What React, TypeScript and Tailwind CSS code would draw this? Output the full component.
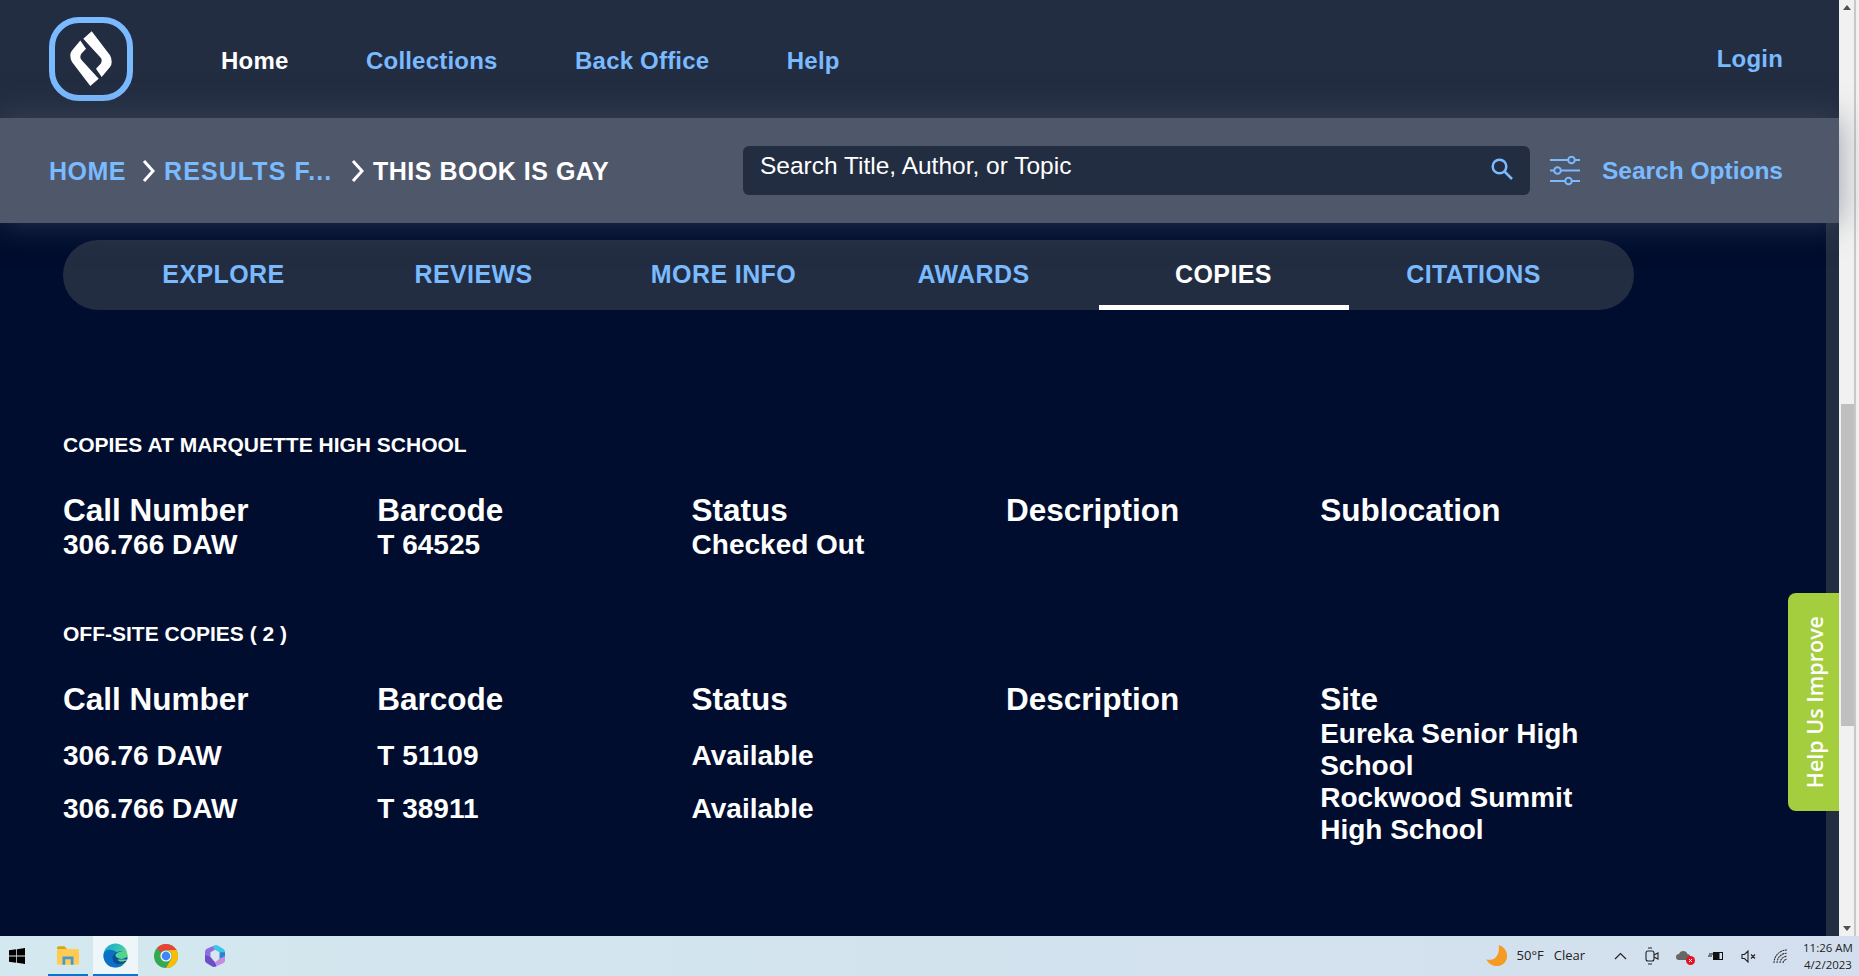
const nav = ['Collections', 'Back Office', 'Help'];
const tabs = ['EXPLORE', 'REVIEWS', 'MORE INFO', 'AWARDS', 'COPIES', 'CITATIONS'];

const Logo = () => (
    <svg width="84" height="84" viewBox="0 0 84 84" fill="none">
        <rect x="3" y="3" width="78" height="78" rx="27" stroke="#7ABAFF" strokeWidth="6" />
        <path d="M34.3 21.7 42.7 14.3 61 38.3Q62.7 41 62.7 45 62.7 48 61 50L52.7 60 47 51.7 51.7 46.7Q52.7 45 52.7 43.3 52.7 41.5 51 40Z" fill="#fff" />
        <path d="M49.7 61.7 41.3 69.1 23 45.1Q21.3 42.4 21.3 38.4 21.3 35.4 23 33.4L31.3 23.4 37 31.7 32.3 36.7Q31.3 38.4 31.3 40.1 31.3 41.9 33 43.4Z" fill="#fff" />
    </svg>
);

const Crumb = () => (
    <svg width="13" height="22" viewBox="0 0 13 22" fill="none" stroke="#fff" strokeWidth="3">
        <path d="M2 1 11 11 2 21" />
    </svg>
);

const SearchIcon = () => (
    <svg width="22" height="22" viewBox="0 0 22 22" fill="none" stroke="#7ABAFF" strokeWidth="2.5">
        <circle cx="8.5" cy="8.5" r="6.8" />
        <path d="M13.5 13.5 21 21" />
    </svg>
);

const SlidersIcon = () => (
    <svg width="30" height="30" viewBox="0 0 30 30" fill="none" stroke="#7ABAFF" strokeWidth="2">
        <path d="M0 4H18M25 4H30M0 14.5H4M11 14.5H30M0 25H15M22 25H30" />
        <circle cx="21.5" cy="4" r="3.3" />
        <circle cx="7.5" cy="14.5" r="3.3" />
        <circle cx="18.5" cy="25" r="3.3" />
    </svg>
);

const Column = ({ title, items, gap }: { title: string; items: string[]; gap?: boolean }) => (
    <div className="w-[314.3px] shrink-0">
        <div className="text-[31.5px] leading-[37px] font-bold">{title}</div>
        <div className={gap ? 'mt-[22px] flex flex-col gap-[21px]' : 'flex flex-col'}>
            {items.map((t) => (
                <div key={t} className="text-[28px] leading-[32px] font-bold">{t}</div>
            ))}
        </div>
    </div>
);

const WinLogo = () => (
    <svg width="16" height="16" viewBox="0 0 17 17" fill="#000">
        <path d="M0 2.4 7.6 1.3V8H0ZM8.4 1.2 17 0V8H8.4ZM0 9H7.6V15.7L0 14.6ZM8.4 9H17V17L8.4 15.8Z" />
    </svg>
);

const FolderIcon = () => (
    <svg width="22" height="19" viewBox="0 0 24 20">
        <path d="M0 2Q0 0 2 0H8L11 3H0Z" fill="#D9A514" />
        <rect x="0" y="3" width="24" height="17" rx="1.5" fill="#FFCB52" />
        <path d="M6 20V11H18V20H15V14H9V20Z" fill="#3E9BD8" />
    </svg>
);

const EdgeIcon = () => (
    <svg width="25" height="25" viewBox="0 0 25 25">
        <defs>
            <linearGradient id="edgeTop" x1="0" y1="0" x2="1" y2="0.6">
                <stop offset="0" stopColor="#1BA1D8" />
                <stop offset="0.6" stopColor="#37C7B0" />
                <stop offset="1" stopColor="#7BDD6B" />
            </linearGradient>
        </defs>
        <circle cx="12.5" cy="12.5" r="12" fill="url(#edgeTop)" />
        <path d="M0.5 12.5C0.5 20 6 24.5 12.5 24.5 16 24.5 19 23.3 21 21 17 22.5 11 21 10 16 9.5 13 11 10 14 9.5 9 5 0.5 6 0.5 12.5Z" fill="#0C71C4" />
        <path d="M9.5 15C9.5 20 14 22 18 21.5 20.5 21 22.5 19.5 23.5 18 24 16.5 21 19 17.5 18.5 16 18.2 15 17.5 14.5 16.5H24.5C25 12 22 9 17.5 8.5 13 8.5 9.5 11 9.5 15Z" fill="#0A4E9B" />
        <ellipse cx="18.5" cy="12.3" rx="6" ry="3.6" fill="#52D38F" />
    </svg>
);

const ChromeIcon = () => (
    <svg width="24" height="24" viewBox="0 0 24 24">
        <circle cx="12" cy="12" r="12" fill="#34A853" />
        <path d="M12 0A12 12 0 0 1 22.4 6H12A6 6 0 0 0 6.8 9L3.3 3.7A12 12 0 0 1 12 0Z" fill="#EA4335" />
        <path d="M22.4 6A12 12 0 0 1 12 24L17.2 15A6 6 0 0 0 17.2 9 6 6 0 0 0 12 6Z" fill="#FBBC05" />
        <circle cx="12" cy="12" r="5.6" fill="#fff" />
        <circle cx="12" cy="12" r="4.4" fill="#4285F4" />
    </svg>
);

const CopilotIcon = () => (
    <svg width="20" height="22" viewBox="0 0 22 24" fill="none">
        <path d="M9 1Q12 -1 15 1L20 4Q22 5 22 8V11L16 8 11 5Z" fill="#3EC6E8" />
        <path d="M22 8V17L16 15V8Z" fill="#2E7FD6" />
        <path d="M0 8Q0 5 2 4L9 1 11 5 6 8V15L0 17Z" fill="#8B6FE0" />
        <path d="M0 17V11L6 13 11 19 13 23Q10 25 7 23L2 20Q0 19 0 17Z" fill="#6C4FC7" />
        <path d="M13 23 11 19 16 15 22 12V17Q22 19 20 20Z" fill="#C48BE0" />
        <circle cx="11" cy="12" r="3.8" fill="#D8E7EE" />
    </svg>
);

const Moon = () => (
    <svg width="22" height="22" viewBox="0 0 24 24">
        <path d="M14 0C19 1.5 23 6 23 12 23 18.5 18 23 12 23 7 23 3 20.5 0 15.5 7 18 15.5 14 14 0Z" fill="#F59A23" />
    </svg>
);

const Slot = ({ children }: { children: React.ReactNode }) => (
    <div className="w-[32px] flex justify-center">{children}</div>
);

const Tray = () => (
    <div className="flex items-center">
        <Slot>
            <svg width="13" height="8" viewBox="0 0 13 8" fill="none" stroke="#222" strokeWidth="1.2">
                <path d="M1 7 6.5 1.5 12 7" />
            </svg>
        </Slot>
        <Slot>
            <svg width="14" height="18" viewBox="0 0 14 18" fill="none" stroke="#222" strokeWidth="1.1">
                <rect x="1" y="4" width="8" height="10" rx="2" />
                <path d="M9 8 13 6V12L9 10M3 1H7M3 17H7" />
            </svg>
        </Slot>
        <Slot>
            <div className="relative w-[16px] h-[14px]">
                <svg width="14" height="12" viewBox="0 0 14 12" fill="#666">
                    <path d="M3 11A3 3 0 0 1 3 5 4.5 4.5 0 0 1 11.5 5 3 3 0 0 1 11 11Z" />
                </svg>
                <svg className="absolute right-[-3px] bottom-[-2px]" width="9" height="9" viewBox="0 0 9 9">
                    <circle cx="4.5" cy="4.5" r="4.5" fill="#E81123" />
                    <path d="M3 3 6 6M6 3 3 6" stroke="#fff" strokeWidth="1" />
                </svg>
            </div>
        </Slot>
        <Slot>
            <svg width="16" height="12" viewBox="0 0 16 12" fill="none" stroke="#111" strokeWidth="1">
                <rect x="5.5" y="2.5" width="9" height="7" />
                <rect x="6" y="3" width="5" height="6" fill="#111" />
                <path d="M0 6H4M2 3V5M4 3V5" />
            </svg>
        </Slot>
        <Slot>
            <svg width="15" height="13" viewBox="0 0 15 13" fill="none" stroke="#222" strokeWidth="1.1">
                <path d="M1 4.5H3.5L7 1V12L3.5 8.5H1ZM10 4.5 14 8.5M14 4.5 10 8.5" />
            </svg>
        </Slot>
        <Slot>
            <svg width="14" height="14" viewBox="0 0 14 14" fill="none" stroke="#333" strokeWidth="1.1">
                <path d="M1 14A13 13 0 0 1 14 1M4 14A10 10 0 0 1 14 4.2M7 14A7 7 0 0 1 14 7.3M10 14A4 4 0 0 1 14 10.4" strokeDasharray="2 .6" />
            </svg>
        </Slot>
    </div>
);

const App = () => {
    return (
        <div className="w-[1859px] h-[976px] flex flex-col overflow-hidden bg-[#000D2E] font-['Liberation_Sans',Arial,sans-serif]">
            <div className="flex flex-1 min-h-0">
                <div className="relative w-[1839px] flex flex-col">
                    <header className="h-[118px] shrink-0 bg-[#232D42] flex items-center pl-[49px] pr-[56px]">
                        <Logo />
                        <nav className="ml-[88px] mt-[3px] flex gap-[77.5px] text-[24px] leading-[28px] font-bold tracking-[0.2px] text-[#7ABAFF]">
                            <span className="text-white">Home</span>
                            {nav.map((n) => (
                                <span key={n}>{n}</span>
                            ))}
                        </nav>
                        <span className="ml-auto mb-[1px] text-[24px] leading-[28px] font-bold tracking-[0.2px] text-[#7ABAFF]">Login</span>
                    </header>

                    <div className="relative z-10 h-[105px] shrink-0 bg-[#4F576B] shadow-[0_0_30px_rgba(79,87,107,0.55)] flex items-center pl-[49px] pr-[56px]">
                        <div className="w-[694px] flex items-center text-[25px] leading-[28px] font-bold tracking-[0.5px] text-[#7ABAFF]">
                            <span>HOME</span>
                            <span className="ml-[16px] mr-[9px] flex"><Crumb /></span>
                            <span className="w-[167px] whitespace-nowrap tracking-[1.1px]">RESULTS F...</span>
                            <span className="ml-[20px] mr-[9px] flex"><Crumb /></span>
                            <span className="text-white">THIS BOOK IS GAY</span>
                        </div>
                        <div className="w-[787px] h-[49px] rounded-[6px] bg-[#232D42] flex items-start pl-[17px] pr-[17px]">
                            <span className="mt-[4px] text-[24.5px] leading-[32px] text-white">Search Title, Author, or Topic</span>
                            <span className="ml-auto mt-[12px] flex"><SearchIcon /></span>
                        </div>
                        <div className="ml-[20px] flex">
                            <SlidersIcon />
                        </div>
                        <span className="ml-auto text-[24.5px] leading-[30px] font-bold text-[#7ABAFF]">Search Options</span>
                    </div>

                    <div className="flex-1 flex min-h-0">
                        <main className="flex-1 pl-[63px] pt-[17px] text-white">
                            <div className="w-[1571px] h-[70px] rounded-[35px] bg-[#232D42] flex justify-center">
                                {tabs.map((t) => (
                                    <div
                                        key={t}
                                        className={
                                            t === 'COPIES'
                                                ? 'w-[250px] flex items-center justify-center border-b-[5px] border-white pt-[5px] text-[25px] font-bold tracking-[0.4px] text-white'
                                                : 'w-[250px] flex items-center justify-center text-[25px] font-bold tracking-[0.4px] text-[#7ABAFF]'
                                        }
                                    >
                                        {t}
                                    </div>
                                ))}
                            </div>

                            <h3 className="mt-[123px] text-[21px] leading-[24px] font-bold">COPIES AT MARQUETTE HIGH SCHOOL</h3>
                            <div className="mt-[35px] flex">
                                <Column title="Call Number" items={['306.766 DAW']} />
                                <Column title="Barcode" items={['T 64525']} />
                                <Column title="Status" items={['Checked Out']} />
                                <Column title="Description" items={[]} />
                                <Column title="Sublocation" items={[]} />
                            </div>

                            <h3 className="mt-[61px] text-[21px] leading-[24px] font-bold">OFF-SITE COPIES ( 2 )</h3>
                            <div className="mt-[35px] flex">
                                <Column title="Call Number" gap items={['306.76 DAW', '306.766 DAW']} />
                                <Column title="Barcode" gap items={['T 51109', 'T 38911']} />
                                <Column title="Status" gap items={['Available', 'Available ']} />
                                <Column title="Description" items={[]} />
                                <div className="w-[270px]">
                                    <div className="text-[31.5px] leading-[37px] font-bold">Site</div>
                                    <div className="text-[28px] leading-[32px] font-bold">
                                        <div>Eureka Senior High School</div>
                                        <div>Rockwood Summit High School</div>
                                    </div>
                                </div>
                            </div>
                        </main>
                        <div className="w-[13px] shrink-0 bg-[#232D42]" />
                    </div>

                    <div className="absolute right-0 top-[593px] w-[51px] h-[218px] rounded-l-[8px] bg-[#A4CE3E] flex items-center justify-center pl-[4px]">
                        <span className="-rotate-90 whitespace-nowrap text-[21.5px] font-semibold text-white font-['Open_Sans',sans-serif]">Help Us Improve</span>
                    </div>
                </div>

                <div className="w-[20px] shrink-0 bg-[#F1F1F1] pl-[2px]">
                    <div className="w-[15px] h-full border-r-[2px] border-[#C8C8C8] flex flex-col items-start">
                        <span className="mt-[5px] ml-[2px] w-0 h-0 border-x-[4px] border-x-transparent border-b-[5px] border-b-[#505050]" />
                        <div className="mt-[394px] w-[13px] h-[322px] bg-[#BFBFBF]" />
                        <span className="mt-auto mb-[5px] ml-[2px] w-0 h-0 border-x-[4px] border-x-transparent border-t-[5px] border-t-[#505050]" />
                    </div>
                </div>
            </div>

            <footer className="h-[40px] shrink-0 flex items-center bg-gradient-to-r from-[#D3E8EF] to-[#D3DFEE] font-['Open_Sans',sans-serif] text-[#222]">
                <div className="w-[48px] pl-[9px] flex">
                    <WinLogo />
                </div>
                <div className="w-[40px] h-full flex items-center justify-center border-b-[2px] border-[#0078D4]">
                    <FolderIcon />
                </div>
                <div className="ml-[5px] w-[45px] h-full flex items-center justify-center bg-[#EEF6FA] border-b-[2px] border-[#0078D4]">
                    <EdgeIcon />
                </div>
                <div className="w-[56px] flex justify-center">
                    <ChromeIcon />
                </div>
                <div className="w-[42px] flex justify-center">
                    <CopilotIcon />
                </div>
                <div className="ml-auto pr-[1px] flex items-center">
                    <Moon />
                    <span className="ml-[9px] text-[13px]">50°F</span>
                    <span className="ml-[10px] mr-[19px] text-[13px]">Clear</span>
                    <Tray />
                    <div className="ml-[2px] w-[60px] text-center text-[11.5px] leading-[17px]">
                        <div>11:26 AM</div>
                        <div>4/2/2023</div>
                    </div>
                </div>
            </footer>
        </div>
    );
};

export default App;
